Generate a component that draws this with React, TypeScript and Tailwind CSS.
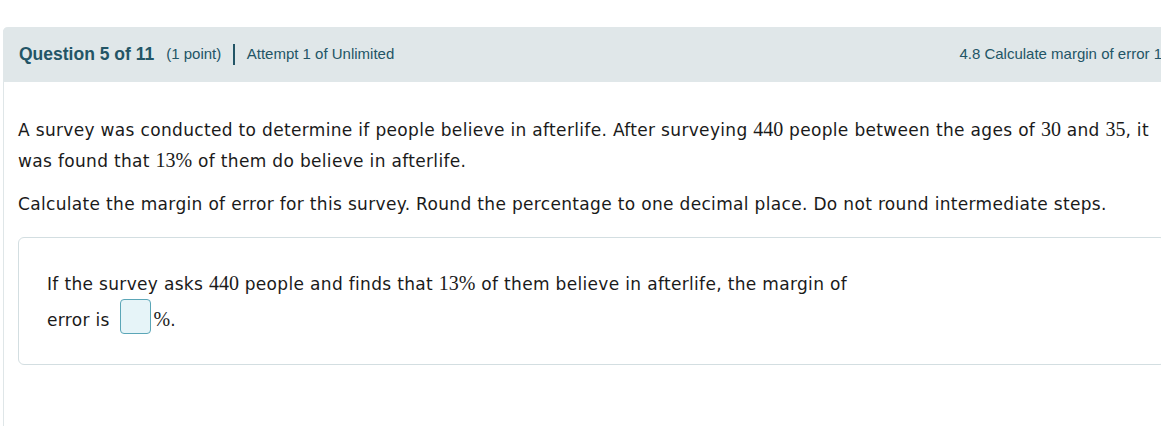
import React from "react";

function M({ children }: { children: React.ReactNode }) {
  return (
    <span className="font-['Liberation_Serif',serif] text-[20px] tracking-normal">{children}</span>
  );
}

export default function App() {
  return (
    <div className="w-[1161px] h-[426px] overflow-hidden bg-white">
      <div className="ml-[3px] mt-[27px] w-[1175px] h-[420px] rounded-tl-[5px] border-l border-[#dfe6e8]">
        <div className="flex items-center h-[55px] -ml-px pl-[16px] pr-[16px] rounded-tl-[5px] bg-[#e0e7e9] text-[#235566] font-['Liberation_Sans',Arial,sans-serif]">
          <span className="text-[17.5px] font-bold">Question 5 of 11</span>
          <span className="ml-[12px] text-[15px]">(1 point)</span>
          <span className="mx-[12px] h-[21px] w-[1.5px] bg-[#235566]" />
          <span className="text-[15px]">Attempt 1 of Unlimited</span>
          <span className="ml-auto text-[15px] whitespace-nowrap">4.8 Calculate margin of error 1</span>
        </div>

        <div className="pl-[14px] pr-[12px] pt-[32px] text-[17px] tracking-[0.33px] text-[#1a1a1a] font-['DejaVu_Sans',Verdana,sans-serif]">
          <p className="leading-[30px]">
            A survey was conducted to determine if people believe in afterlife. After surveying <M>440</M> people
            between the ages of <M>30</M> and <M>35</M>, it was found that <M>13%</M> of them do believe in afterlife.
          </p>
          <p className="mt-[13px] leading-[30px]">
            Calculate the margin of error for this survey. Round the percentage to one decimal place. Do not round
            intermediate steps.
          </p>

          <div className="mt-[18px] rounded-[6px] border border-[#d3dee1] pl-[28px] pt-[28px] pb-[26px]">
            <p className="w-[840px] leading-[35px]">
              If the survey asks <M>440</M> people and finds that <M>13%</M> of them believe in afterlife, the margin
              of error is{" "}
              <span className="inline-block align-[-8px] -mt-[4px] w-[31px] h-[35px] rounded-[4px] border-[1.5px] border-[#5ba6b7] bg-[#e6f4f8] ml-[4px] mr-[3px]" />
              <M>%</M>.
            </p>
          </div>
        </div>
      </div>
    </div>
  );
}
